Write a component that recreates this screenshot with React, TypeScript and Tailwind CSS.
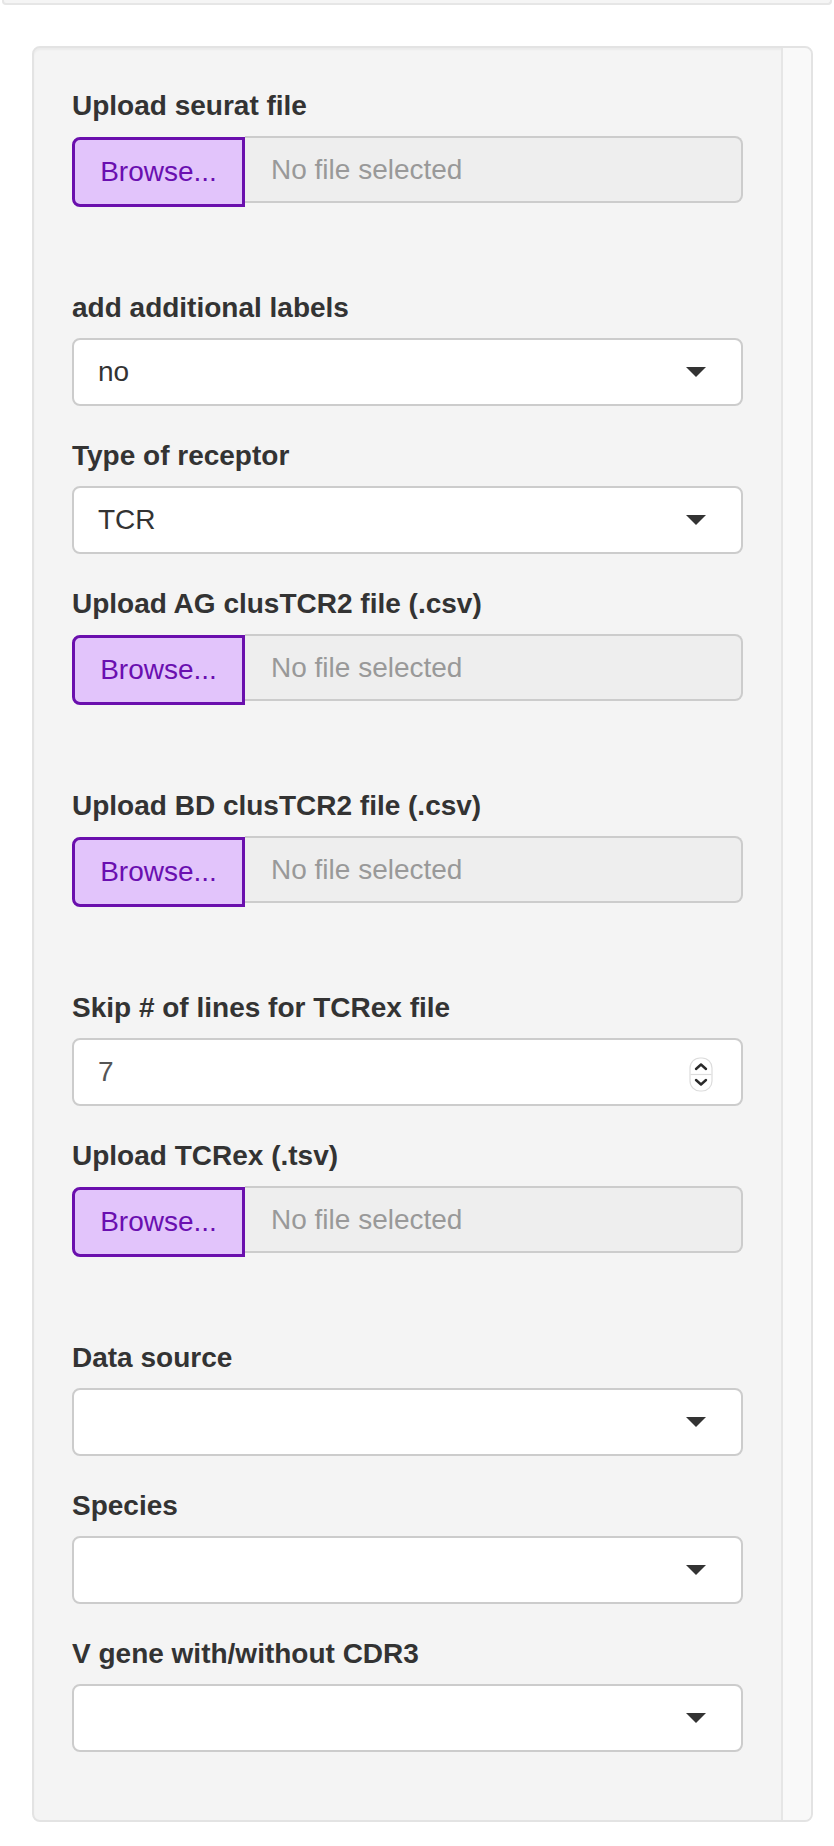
import React from "react";

const font = { fontFamily: '"Liberation Sans", Arial, Helvetica, sans-serif' };

function Label({ children }: { children: React.ReactNode }) {
  return (
    <div className="text-[28px] font-bold leading-[40px] mb-[10px] text-[#333333] whitespace-nowrap">
      {children}
    </div>
  );
}

function FileInput({ label }: { label: string }) {
  return (
    <div className="mb-[84px]">
      <Label>{label}</Label>
      <div className="flex h-[68px] items-start">
        <div className="mt-px h-[70px] w-[173px] shrink-0 rounded-l-[8px] border-[3px] border-[#6a0fad] bg-[#e2c4fb] flex items-center justify-center text-[28px] text-[#6a0fb0]">
          Browse...
        </div>
        <div className="h-[67px] flex-1 rounded-r-[8px] border-2 border-l-0 border-[#cccccc] bg-[#eeeeee] flex items-center pl-[24px] text-[28px] text-[#999999]">
          <span className="border-l-2 border-transparent">No file selected</span>
        </div>
      </div>
    </div>
  );
}

function Caret() {
  return (
    <svg width="20" height="10" viewBox="0 0 20 10" className="absolute right-[35px] top-1/2 -translate-y-1/2">
      <polygon points="0,0 20,0 10,10" fill="#333333" />
    </svg>
  );
}

function Select({ label, value }: { label: string; value?: string }) {
  return (
    <div className="mb-[30px]">
      <Label>{label}</Label>
      <div className="relative h-[68px] rounded-[8px] border-2 border-[#cccccc] bg-white flex items-center pl-[24px] text-[28px] text-[#333333]">
        <span>{value ?? ""}</span>
        <Caret />
      </div>
    </div>
  );
}

function NumberInput({ label, value }: { label: string; value: string }) {
  return (
    <div className="mb-[30px]">
      <Label>{label}</Label>
      <div className="relative h-[68px] rounded-[8px] border-2 border-[#cccccc] bg-white flex items-center pl-[24px] text-[28px] text-[#555555]">
        <span>{value}</span>
        <svg
          width="24"
          height="35"
          viewBox="0 0 24 35"
          className="absolute right-[28px] top-1/2 -translate-y-[15px]"
        >
          <rect x="1" y="1" width="22" height="33" rx="10" fill="#ffffff" stroke="#dcdcdc" strokeWidth="1.2" />
          <line x1="1.5" y1="17.5" x2="22.5" y2="17.5" stroke="#dcdcdc" strokeWidth="1.2" />
          <polyline points="7,12 12,7.5 17,12" fill="none" stroke="#2a2a2a" strokeWidth="2.4" strokeLinecap="round" strokeLinejoin="round" />
          <polyline points="7,23 12,27.5 17,23" fill="none" stroke="#2a2a2a" strokeWidth="2.4" strokeLinecap="round" strokeLinejoin="round" />
        </svg>
      </div>
    </div>
  );
}

export default function App() {
  return (
    <div className="min-h-[1846px] bg-white" style={font}>
      <div className="mx-[2px] h-[5px] rounded-b-[4px] border-x-2 border-b-2 border-[#e6e6e6] bg-[#f5f5f5]" />
      <div className="ml-[32px] mt-[41px] w-[781px] rounded-[8px] border-2 border-[#e3e3e3] bg-[#f4f4f4] flex shadow-[inset_0_2px_2px_rgba(0,0,0,0.04)]">
        <div className="flex-1 px-[38px] pt-[38px] pb-[38px]">
          <FileInput label="Upload seurat file" />
          <Select label="add additional labels" value="no" />
          <Select label="Type of receptor" value="TCR" />
          <FileInput label="Upload AG clusTCR2 file (.csv)" />
          <FileInput label="Upload BD clusTCR2 file (.csv)" />
          <NumberInput label="Skip # of lines for TCRex file" value="7" />
          <FileInput label="Upload TCRex (.tsv)" />
          <Select label="Data source" />
          <Select label="Species" />
          <Select label="V gene with/without CDR3" />
        </div>
        <div className="w-[30px] shrink-0 border-l-2 border-[#e6e6e6] bg-[#f9f9f9] rounded-r-[6px]" />
      </div>
    </div>
  );
}
